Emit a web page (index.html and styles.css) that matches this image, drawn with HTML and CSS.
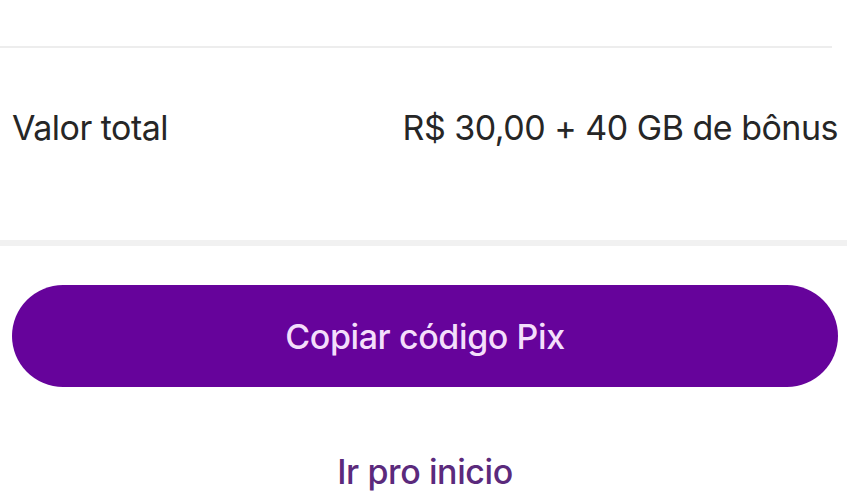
FILE: index.html
```html
<!DOCTYPE html>
<html lang="pt-BR">
<head>
    <meta charset="UTF-8">
    <meta name="viewport" content="width=device-width, initial-scale=1.0">
    <title>Pagamento Pix</title>
    <link rel="stylesheet" href="styles.css">
</head>
<body>
    <main class="checkout">
        <section class="summary">
            <div class="summary-row">
                <span class="label">Valor total</span>
                <span class="value">R$ 30,00 + 40 GB de bônus</span>
            </div>
        </section>

        <div class="divider"></div>

        <div class="actions">
            <button class="btn-primary" type="button">Copiar código Pix</button>
            <a class="link-home" href="#">Ir pro inicio</a>
        </div>
    </main>
</body>
</html>
```

FILE: styles.css
```css
/* Basic reset */
* {
    box-sizing: border-box;
    margin: 0;
    padding: 0;
}

body {
    background: #fff;
    font-family: "Inter", "Noto Sans", sans-serif;
    color: #262626;
    width: 847px;
    height: 500px;
    overflow: hidden;
}

/* Summary */
.summary {
    padding-top: 46px;
}

.summary-row {
    display: flex;
    justify-content: space-between;
    align-items: center;
    height: 194px;
    border-top: 2px solid #ededed;
    margin-right: 15px;
    padding: 0 0 34px 12px;
    font-size: 34px;
    letter-spacing: -0.5px;
}

.value {
    margin-right: -6px;
}

.divider {
    height: 6px;
    background: #f1f1f1;
}

/* Actions */
.actions {
    display: flex;
    flex-direction: column;
    align-items: center;
    padding: 39px 9px 0 12px;
}

.btn-primary {
    width: 100%;
    height: 102px;
    border: none;
    border-radius: 51px;
    background: #66039b;
    color: #f4defb;
    font-family: inherit;
    font-size: 34px;
    font-weight: 500;
    letter-spacing: -0.4px;
}

.link-home {
    margin-top: 64px;
    color: #5b2a7c;
    font-size: 34px;
    font-weight: 500;
    letter-spacing: -0.4px;
    text-decoration: none;
}
```
